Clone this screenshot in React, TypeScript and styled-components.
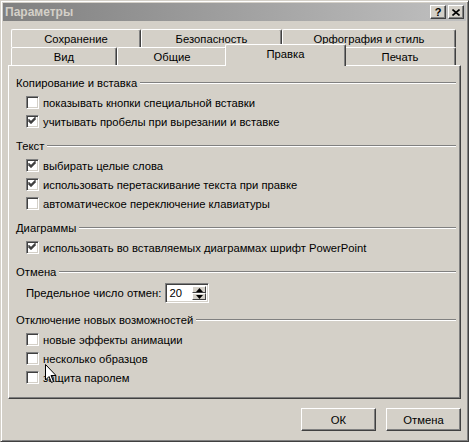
import styled, { createGlobalStyle } from "styled-components";

const GlobalStyle = createGlobalStyle`
  html, body { margin: 0; padding: 0; background: #d4d0c8; }
  body { font-family: "Liberation Sans", Arial, sans-serif; font-size: 11.25px; color: #000; }
`;

const Window = styled.div`
  position: relative;
  width: 469px;
  height: 442px;
  box-sizing: border-box;
  background: #d4d0c8;
  border-top: 1px solid #d4d0c8;
  border-left: 1px solid #d4d0c8;
  border-right: 1px solid #404040;
  border-bottom: 1px solid #404040;
  box-shadow: inset 1px 1px 0 #fff, inset -1px -1px 0 #808080;
  padding: 2px;
  display: flex;
  flex-direction: column;
`;

const TitleBar = styled.div`
  height: 18px;
  display: flex;
  align-items: center;
  justify-content: space-between;
  padding: 0 2px 0 2px;
  background: linear-gradient(to right, #808080, #c0c0c0);
`;

const Title = styled.span`
  font-weight: bold;
  color: #d4d0c8;
  font-size: 12px;
`;

const TitleButtons = styled.div`
  display: flex;
  gap: 2px;
`;

const TitleButton = styled.div`
  width: 16px;
  height: 14px;
  box-sizing: border-box;
  background: #d4d0c8;
  border-top: 1px solid #fff;
  border-left: 1px solid #fff;
  border-right: 1px solid #404040;
  border-bottom: 1px solid #404040;
  box-shadow: inset -1px -1px 0 #808080;
  display: flex;
  align-items: center;
  justify-content: center;
  font-weight: bold;
  font-size: 11px;
  line-height: 1;
`;

const Body = styled.div`
  flex: 1;
  display: flex;
  flex-direction: column;
  padding: 8px 5px 7px 5px;
`;

const TabRow = styled.div`
  display: flex;
  height: 18px;
  padding-left: 3px;
  align-items: flex-start;
`;

const Tab = styled.div<{ $w: number; $active?: boolean }>`
  position: relative;
  width: ${(p) => (p.$active ? p.$w + 4 : p.$w)}px;
  height: ${(p) => (p.$active ? 22 : 18)}px;
  margin: ${(p) => (p.$active ? "-3px -2px 0 -2px" : "0")};
  z-index: ${(p) => (p.$active ? 2 : 1)};
  box-sizing: border-box;
  background: #d4d0c8;
  border-top: 1px solid #fff;
  border-left: 1px solid #fff;
  border-right: 1px solid #404040;
  border-radius: 2px 2px 0 0;
  box-shadow: inset -1px 0 0 #808080;
  display: flex;
  justify-content: center;
  padding-top: 2px;
  line-height: 14px;
`;

const Panel = styled.div`
  height: 334px;
  box-sizing: border-box;
  border-top: 1px solid #fff;
  border-left: 1px solid #fff;
  border-right: 1px solid #404040;
  border-bottom: 1px solid #404040;
  box-shadow: inset -1px -1px 0 #808080;
  padding: 10px 4px 0 7px;
`;

const Group = styled.div<{ $gap?: number }>`
  margin-bottom: ${(p) => p.$gap ?? 8}px;
`;

const Legend = styled.div`
  display: flex;
  align-items: center;
  height: 14px;
  margin-bottom: 3px;
  gap: 3px;
`;

const LegendLine = styled.div`
  flex: 1;
  border-top: 1px solid #808080;
  border-bottom: 1px solid #fff;
`;

const Row = styled.div<{ $h?: number }>`
  display: flex;
  align-items: center;
  height: ${(p) => p.$h ?? 19}px;
  padding-left: 10px;
  gap: 4px;
  white-space: nowrap;
`;

const Box = styled.div`
  width: 13px;
  height: 13px;
  box-sizing: border-box;
  background: #fff;
  border-top: 1px solid #808080;
  border-left: 1px solid #808080;
  border-right: 1px solid #fff;
  border-bottom: 1px solid #fff;
  box-shadow: inset 1px 1px 0 #404040, inset -1px -1px 0 #d4d0c8;
  flex-shrink: 0;
`;

const Spin = styled.div`
  display: flex;
  width: 44px;
  height: 20px;
  box-sizing: border-box;
  background: #fff;
  border-top: 1px solid #808080;
  border-left: 1px solid #808080;
  border-right: 1px solid #fff;
  border-bottom: 1px solid #fff;
  box-shadow: inset 1px 1px 0 #404040, inset -1px -1px 0 #d4d0c8;
  padding: 2px;
`;

const SpinValue = styled.div`
  flex: 1;
  line-height: 15px;
  padding-left: 1px;
`;

const SpinButtons = styled.div`
  display: flex;
  flex-direction: column;
  width: 14px;
`;

const SpinButton = styled.div`
  flex: 1;
  box-sizing: border-box;
  background: #d4d0c8;
  border-top: 1px solid #fff;
  border-left: 1px solid #fff;
  border-right: 1px solid #404040;
  border-bottom: 1px solid #404040;
  display: flex;
  align-items: center;
  justify-content: center;
`;

const Footer = styled.div`
  display: flex;
  justify-content: flex-end;
  gap: 10px;
  margin-top: 9px;
`;

const Button = styled.div`
  width: 75px;
  height: 23px;
  box-sizing: border-box;
  background: #d4d0c8;
  border-top: 1px solid #fff;
  border-left: 1px solid #fff;
  border-right: 1px solid #404040;
  border-bottom: 1px solid #404040;
  box-shadow: inset -1px -1px 0 #808080;
  display: flex;
  align-items: center;
  justify-content: center;
`;

const Cursor = styled.svg`
  position: absolute;
  left: 44px;
  top: 363px;
  z-index: 5;
`;

const Check = () => (
  <svg width="11" height="11" viewBox="0 0 11 11" style={{ display: "block" }}>
    {[
      [2, 4],
      [3, 5],
      [4, 6],
      [5, 5],
      [6, 4],
      [7, 3],
      [8, 2],
    ].map(([x, y]) => (
      <rect key={x} x={x - 0.5} y={y - 1} width={1} height={3} fill="#000" />
    ))}
  </svg>
);

const CheckBox = ({ checked, label }: { checked?: boolean; label: string }) => (
  <Row>
    <Box>{checked && <Check />}</Box>
    <span>{label}</span>
  </Row>
);

const Arrow = ({ up }: { up?: boolean }) => (
  <svg width="7" height="4" viewBox="0 0 7 4">
    <polygon points={up ? "3.5,0 7,4 0,4" : "0,0 7,0 3.5,4"} fill="#000" />
  </svg>
);

const Section = ({ title, children, gap }: { title: string; children: React.ReactNode; gap?: number }) => (
  <Group $gap={gap}>
    <Legend>
      <span>{title}</span>
      <LegendLine />
    </Legend>
    {children}
  </Group>
);

const App = () => {
  return (
    <>
      <GlobalStyle />
      <Window>
        <TitleBar>
          <Title>Параметры</Title>
          <TitleButtons>
            <TitleButton>?</TitleButton>
            <TitleButton>
              <svg width="8" height="7" viewBox="0 0 8 7">
                <path d="M0.5 0.5 L7.5 6.5 M7.5 0.5 L0.5 6.5" stroke="#000" strokeWidth="1.6" />
              </svg>
            </TitleButton>
          </TitleButtons>
        </TitleBar>
        <Body>
          <TabRow>
            <Tab $w={130}>Сохранение</Tab>
            <Tab $w={141}>Безопасность</Tab>
            <Tab $w={174}>Орфография и стиль</Tab>
          </TabRow>
          <TabRow>
            <Tab $w={106}>Вид</Tab>
            <Tab $w={110}>Общие</Tab>
            <Tab $w={117} $active>
              Правка
            </Tab>
            <Tab $w={112}>Печать</Tab>
          </TabRow>
          <Panel>
            <Section title="Копирование и вставка">
              <CheckBox label="показывать кнопки специальной вставки" />
              <CheckBox checked label="учитывать пробелы при вырезании и вставке" />
            </Section>
            <Section title="Текст">
              <CheckBox checked label="выбирать целые слова" />
              <CheckBox checked label="использовать перетаскивание текста при правке" />
              <CheckBox label="автоматическое переключение клавиатуры" />
            </Section>
            <Section title="Диаграммы">
              <CheckBox checked label="использовать во вставляемых диаграммах шрифт PowerPoint" />
            </Section>
            <Section title="Отмена" gap={9}>
              <Row $h={22}>
                <span>Предельное число отмен:</span>
                <Spin>
                  <SpinValue>20</SpinValue>
                  <SpinButtons>
                    <SpinButton>
                      <Arrow up />
                    </SpinButton>
                    <SpinButton>
                      <Arrow />
                    </SpinButton>
                  </SpinButtons>
                </Spin>
              </Row>
            </Section>
            <Section title="Отключение новых возможностей">
              <CheckBox label="новые эффекты анимации" />
              <CheckBox label="несколько образцов" />
              <CheckBox label="защита паролем" />
            </Section>
          </Panel>
          <Footer>
            <Button>ОК</Button>
            <Button>Отмена</Button>
          </Footer>
        </Body>
        <Cursor width="12" height="19" viewBox="0 0 12 19">
          <polygon points="0.5,0.5 0.5,16 4,12.5 6.5,18.5 8.5,17.5 6,11.5 11,11.5" fill="#fff" stroke="#000" strokeWidth="1" />
        </Cursor>
      </Window>
    </>
  );
};

export default App;
